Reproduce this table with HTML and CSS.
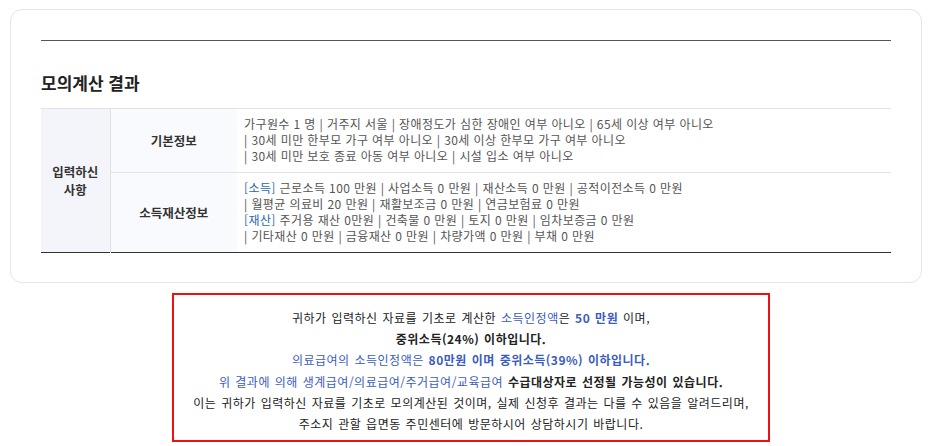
FILE: index.html
```html
<!DOCTYPE html>
<html lang="ko">
<head>
<meta charset="utf-8">
<link rel="stylesheet" href="styles.css">
</head>
<body>
<div class="card">
  <div class="topline"></div>
  <h2 class="title">모의계산 결과</h2>
  <table class="result">
    <tr>
      <th class="c1" rowspan="2">입력하신<br>사항</th>
      <th class="c2">기본정보</th>
      <td class="c3">가구원수 1 명 | 거주지 서울 | 장애정도가 심한 장애인 여부 아니오 | 65세 이상 여부 아니오<br>| 30세 미만 한부모 가구 여부 아니오 | 30세 이상 한부모 가구 여부 아니오<br>| 30세 미만 보호 종료 아동 여부 아니오 | 시설 입소 여부 아니오</td>
    </tr>
    <tr>
      <th class="c2">소득재산정보</th>
      <td class="c3"><span class="tag">[소득]</span> 근로소득 100 만원 | 사업소득 0 만원 | 재산소득 0 만원 | 공적이전소득 0 만원<br>| 월평균 의료비 20 만원 | 재활보조금 0 만원 | 연금보험료 0 만원<br><span class="tag">[재산]</span> 주거용 재산 0만원 | 건축물 0 만원 | 토지 0 만원 | 임차보증금 0 만원<br>| 기타재산 0 만원 | 금융재산 0 만원 | 차량가액 0 만원 | 부채 0 만원</td>
    </tr>
  </table>
</div>
<div class="notice">
  <p>귀하가 입력하신 자료를 기초로 계산한 <span class="blue">소득인정액</span>은 <b class="blue">50 만원</b> 이며,</p>
  <p><b>중위소득(24%) 이하입니다.</b></p>
  <p class="blue">의료급여의 소득인정액은 <b>80만원 이며 중위소득(39%) 이하입니다.</b></p>
  <p><span class="blue">위 결과에 의해 생계급여/의료급여/주거급여/교육급여</span> <b>수급대상자로 선정될 가능성이 있습니다.</b></p>
  <p>이는 귀하가 입력하신 자료를 기초로 모의계산된 것이며, 실제 신청후 결과는 다를 수 있음을 알려드리며,</p>
  <p>주소지 관할 읍면동 주민센터에 방문하시어 상담하시기 바랍니다.</p>
</div>
</body>
</html>
```
FILE: styles.css
```css
* { box-sizing: border-box; }
html, body { margin: 0; padding: 0; background: #fff; }
body {
  font-family: "Noto Sans CJK KR", "Noto Sans", sans-serif;
  color: #333;
  padding: 9px 0 0 10px;
}
.card {
  width: 912px;
  height: 274px;
  border: 1px solid #e5e5e5;
  border-radius: 12px;
  padding: 30px 30px 0 30px;
}
.topline {
  height: 1px;
  background: #555;
}
.title {
  margin: 30px 0 0 0;
  font-size: 17px;
  line-height: 24px;
  font-weight: 700;
  color: #222;
  height: 37px;
}
.result {
  width: 100%;
  border-collapse: collapse;
  border-top: 1px solid #e2e2e2;
  border-bottom: 1px solid #333;
  font-size: 12px;
}
.result th {
  font-weight: 700;
  color: #333;
  font-size: 12.5px;
  line-height: 17px;
  text-align: center;
}
.result th.c1 {
  line-height: 18px;
}
.c1 {
  width: 69px;
  background: #f3f5fa;
  border-right: 1px solid #e2e2e2;
}
.c2 {
  width: 127px;
  background: #f9fafd;
}
.c3 {
  padding: 7px 7px 8px 7px;
  line-height: 16px;
  color: #555;
  letter-spacing: 0.4px;
}
.result tr + tr th, .result tr + tr td {
  border-top: 1px solid #e2e2e2;
}
.tag { color: #2a6aa8; }
.notice {
  width: 598px;
  margin: 10px 0 0 162px;
  border: 2px solid #ee1111;
  padding: 12px 0 6px 0;
  text-align: center;
  font-size: 12px;
  line-height: 21.2px;
  color: #222;
  word-spacing: 1px;
  letter-spacing: 0.5px;
}
.notice p { margin: 0; }
.notice b { font-weight: 700; }
.blue { color: #3b5cbf; }
```
